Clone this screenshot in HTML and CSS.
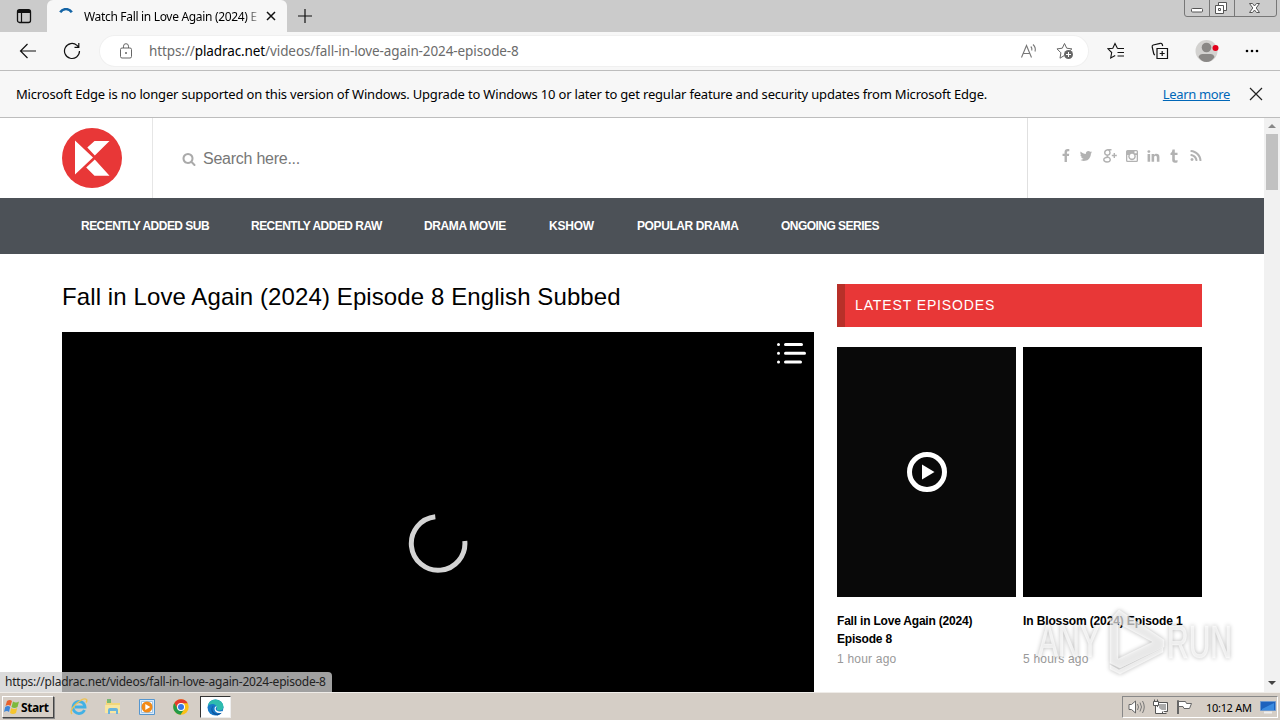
FILE: index.html
```html
<!DOCTYPE html>
<html lang="en">
<head>
<meta charset="utf-8">
<title>Fall in Love Again (2024) Episode 8 English Subbed</title>
<link rel="stylesheet" href="styles.css">
</head>
<body>
<div class="tabstrip">
  <svg class="tab-actions" width="16" height="16" viewBox="0 0 16 16"><rect x="1.500" y="1.700" width="13" height="12.800" rx="2" fill="none" stroke="#111" stroke-width="1.300"/><path d="M2 2h12v3H2z" fill="#111"/><path d="M5.500 5v9" stroke="#111" stroke-width="1.200"/></svg>
  <div class="tab">
    <svg width="16" height="16" viewBox="0 0 16 16"><path d="M2.2 4.200A7 7 0 0 1 13.800 4.200" fill="none" stroke="#1464a5" stroke-width="2.500"/></svg>
    <span class="tab-title">Watch Fall in Love Again (2024) E</span>
    <svg class="tab-close" width="10" height="10" viewBox="0 0 10 10"><path d="M1 1l8 8M9 1l-8 8" stroke="#111" stroke-width="1.500"/></svg>
  </div>
  <svg class="new-tab" width="16" height="16" viewBox="0 0 16 16"><path d="M8 1v14M1 8h14" stroke="#111" stroke-width="1.200"/></svg>
  <svg class="window-controls" width="94" height="18" viewBox="0 0 94 18"><path d="M.5 0v14q0 2.500 2.500 2.500h87q2.500 0 2.500-2.500V0M25.500 0v16M50.500 0v16" fill="none" stroke="#777"/><g fill="#fff" stroke="#555"><rect x="7.500" y="8.500" width="11" height="3.500" rx="1"/><path d="M34.500 2.500h8v8h-8z"/><path d="M31.500 5.500h8v8h-8z"/><path d="M34.500 8.500h2v2h-2z"/><path d="M65.500 3.500h3l2 2.500 2-2.500h3l-3.300 4.500 3.300 4.500h-3l-2-2.500-2 2.500h-3l3.300-4.500z"/></g></svg>
</div>

<div class="toolbar">
  <svg class="back" width="18" height="16" viewBox="0 0 18 16"><path d="M17 8H1.500M8.500 1L1.500 8l7 7" fill="none" stroke="#111" stroke-width="1.200"/></svg>
  <svg class="reload" width="18" height="18" viewBox="0 0 18 18"><path d="M16.500 9A7.500 7.500 0 1 1 14 3.400l1.500 1.500M15.800 1v4.300h-4.300" fill="none" stroke="#111" stroke-width="1.200"/></svg>
  <div class="address">
    <svg class="lock" width="14" height="16" viewBox="0 0 14 16"><rect x="1.500" y="5" width="11" height="10" rx="1.500" fill="none" stroke="#666"/><path d="M4.500 5V3.200a2.500 2.500 0 0 1 5 0V5" fill="none" stroke="#666"/><circle cx="7" cy="10" r="1" fill="#666"/></svg>
    <span class="url">https://<b>pladrac.net</b>/videos/fall-in-love-again-2024-episode-8</span>
    <svg class="read" width="18" height="16" viewBox="0 0 18 16"><path d="M1.500 14.500L6.500 2.500l5 12M3.300 10.500h6.500M10.800 3.500q1.500 1.500 1 4M13 1.500q3.200 3 2 7" fill="none" stroke="#777" stroke-width="1.100"/></svg>
    <svg class="fav" width="18" height="18" viewBox="0 0 18 18"><path d="M6.300 6.200L8.500 1.500l2.200 4.700 5.200.7-2.500 2.300M8 13.700l-4 2.500.9-5.400L1 6.900l5.300-.7" fill="none" stroke="#666"/><circle cx="12.500" cy="12.500" r="4.500" fill="#666"/><path d="M12.500 10v5M10 12.500h5" stroke="#fff"/></svg>
  </div>
  <svg class="favs" width="18" height="18" viewBox="0 0 18 18"><path d="M10.500 6.500L8 1.500 5.800 6.200 1 6.800l3.700 3.700-1 5.500 4.500-2.500M10.500 6.500H17M10.500 10.500H17M10.500 14H17" fill="none" stroke="#111" stroke-width="1.100"/></svg>
  <svg class="collections" width="18" height="18" viewBox="0 0 18 18"><path d="M6 6.500h10.500v10H6zM11.200 9v5M8.700 11.500h5M4 13q-1-.3-1.300-1.500L1.200 5q-.3-1.500 1-2l7-1.700q1.400-.3 2 1l.5 1.700" fill="none" stroke="#111" stroke-width="1.200"/></svg>
  <svg class="profile" width="24" height="24" viewBox="0 0 24 24"><circle cx="11.500" cy="12" r="11" fill="#d3d2d0"/><circle cx="11.500" cy="8.500" r="4.800" fill="#8a8886"/><path d="M3.500 18q1-3 4-3h8q3 0 4 3-3 5-8 5t-8-5z" fill="#8a8886"/><circle cx="20.500" cy="9" r="3" fill="#e3001b"/></svg>
  <svg class="more" width="14" height="4" viewBox="0 0 14 4"><circle cx="2" cy="2" r="1.300"/><circle cx="7" cy="2" r="1.300"/><circle cx="12" cy="2" r="1.300"/></svg>
</div>

<div class="notice">
  <span class="notice-text">Microsoft Edge is no longer supported on this version of Windows. Upgrade to Windows 10 or later to get regular feature and security updates from Microsoft Edge.</span>
  <a class="learn">Learn more</a>
  <svg class="notice-close" width="14" height="14" viewBox="0 0 14 14"><path d="M1 1l12 12M13 1L1 13" stroke="#222" stroke-width="1.200"/></svg>
</div>

<div class="view">
  <div class="page">
    <header class="header">
      <div class="brand"><svg width="60" height="60" viewBox="0 0 60 60"><circle cx="30" cy="30" r="30" fill="#e83737"/><path d="M13 12.500l18 17L13 46.500zM47.500 13h-15L25.300 19.500l7.500 8zM32.800 31.500l14.700 16.200h-15L24.200 39.500z" fill="#fff"/></svg></div>
      <div class="search">
        <svg width="14" height="14" viewBox="0 0 1792 1792"><path fill="#aaa" d="M1216 832q0-185-131.500-316.500t-316.500-131.500-316.500 131.500-131.500 316.500 131.500 316.500 316.500 131.500 316.500-131.500 131.500-316.500zm512 832q0 52-38 90t-90 38q-54 0-90-38l-343-342q-179 124-399 124-143 0-273.500-55.500t-225-150-150-225-55.500-273.500 55.500-273.500 150-225 225-150 273.500-55.500 273.500 55.500 225 150 150 225 55.500 273.500q0 220-124 399l343 343q37 37 37 90z"/></svg>
        <span>Search here...</span>
      </div>
      <div class="social">
        <svg width="8" height="14" viewBox="470 0 900 1792"><path d="M1343 12v264h-157q-86 0-116 36t-30 108v189h293l-39 296h-254v759h-306v-759h-255v-296h255v-218q0-186 104-288.500t277-102.500q147 0 228 12z"/></svg>
        <svg class="s-tw" width="14" height="14" viewBox="0 0 1792 1792"><path d="M1684 408q-67 98-162 167 1 14 1 42 0 130-38 259.500t-115.500 248.500-184.500 210.500-258 146-323 54.500q-271 0-496-145 35 4 78 4 225 0 401-138-105-2-188-64.500t-114-159.500q33 5 61 5 43 0 85-11-112-23-185.500-111.500t-73.500-205.500v-4q68 38 146 41-66-44-105-115t-39-154q0-88 44-163 121 149 294.500 238.500t371.500 99.500q-8-38-8-74 0-134 94.500-228.500t228.500-94.500q140 0 236 102 109-21 205-78-37 115-142 178 93-10 186-50z"/></svg>
        <svg class="s-gp" width="14" height="14" viewBox="0 0 14 14"><path d="M8.500.8H4.800Q1.700 1.300 1.700 3.800 1.800 6 4.500 6.200q2.500-.2 2.500-2.700Q6.800 1.400 5.300 1M4.500 6.200q-.8 1 .3 1.700 2.500 1.200 2.500 2.800-.2 2.300-3.300 2.300Q.8 12.900.8 10.800.9 8.500 4.800 8.300M11.300 4v5M8.800 6.500h5" fill="none" stroke="#b2b2b2" stroke-width="1.400"/></svg>
        <svg class="s-ig" width="12" height="14" viewBox="0 0 12 14"><path fill-rule="evenodd" d="M1.500 1h9Q12 1 12 2.500v9q0 1.500-1.500 1.500h-9Q0 13 0 11.500v-9Q0 1 1.500 1zM1.300 6v5.200q0 .5.5.5h8.400q.5 0 .5-.5V6H9.500a3.800 3.800 0 1 1-7 0zM8.500 2.300v2h2.200v-2zM6 4.800a2.400 2.400 0 1 0 .01 0z"/></svg>
        <svg class="s-in" width="13" height="14" viewBox="80 0 1650 1792"><path d="M477 625v991h-330v-991h330zm21-306q1 73-50.500 122t-135.500 49h-2q-82 0-132-49t-50-122q0-74 51.500-122.500t134.500-48.500 133 48.500 51 122.500zm1166 729v568h-329v-530q0-105-40.500-164.500t-126.500-59.500q-63 0-105.500 34.500t-63.500 85.500q-11 30-11 81v553h-329q2-399 2-647t-1-296l-1-48h329v144h-2q20-32 41-56t56.500-52 87-43.500 114.500-15.500q171 0 275 113.500t104 332.500z"/></svg>
        <svg class="s-tu" width="8" height="14" viewBox="0 0 8 14"><path d="M2.500.5h2.300v3.300h2.700v2.300H4.800v4.200q0 1.200 1.200 1.200.8 0 1.500-.4v2.200q-1 .5-2.500.5-2.800 0-2.800-2.800V6.100H.5V4.200Q2.300 3.300 2.500.5z"/></svg>
        <svg class="s-rs" width="14" height="14" viewBox="0 0 1792 1792"><path d="M576 1344q0 80-56 136t-136 56-136-56-56-136 56-136 136-56 136 56 56 136zm512 123q2 28-17 48-18 21-47 21h-135q-25 0-43-16.500t-20-41.500q-22-229-184.500-391.500t-391.500-184.500q-25-2-41.500-20t-16.500-43v-135q0-29 21-47 17-17 43-17h5q160 13 306 80.500t259 181.500q114 113 181.500 259t80.500 306zm512 2q2 27-18 47-18 20-46 20h-143q-26 0-44.500-17.500t-19.500-42.500q-12-215-101-408.500t-231.500-336-336-231.500-408.500-102q-25-1-42.500-19.500t-17.500-43.500v-143q0-28 20-46 18-18 44-18h3q262 13 501.500 120t425.500 294q187 186 294 425.500t120 501.500z"/></svg>
      </div>
    </header>
    <nav class="nav"><a>RECENTLY ADDED SUB</a><a>RECENTLY ADDED RAW</a><a>DRAMA MOVIE</a><a>KSHOW</a><a>POPULAR DRAMA</a><a>ONGOING SERIES</a></nav>
    <main class="content">
      <section class="watch">
        <h1>Fall in Love Again (2024) Episode 8 English Subbed</h1>
        <div class="player">
          <svg class="playlist" width="30" height="24" viewBox="0 0 30 24"><g fill="none" stroke="#fff" stroke-width="3" stroke-linecap="round"><path d="M9.500 3.500h16M9.500 12.300h19M9.500 21h15M2.500 3.500h.01M2.500 12.300h.01M2.500 21h.01"/></g></svg>
          <svg class="spinner" width="60" height="60" viewBox="0 0 60 60"><path d="M27.300 3.800A26.800 26.800 0 1 0 56.800 28" fill="none" stroke="#d4d4d4" stroke-width="5"/></svg>
        </div>
      </section>
      <aside class="latest">
        <h2>LATEST EPISODES</h2>
        <div class="cards">
          <article>
            <div class="thumb hover"><svg width="40" height="40" viewBox="0 0 40 40"><circle cx="20" cy="20" r="17.500" fill="none" stroke="#fff" stroke-width="5"/><path d="M15 12.500L27.500 20 15 27.500z" fill="#fff"/></svg></div>
            <h3>Fall in Love Again (2024) Episode 8</h3><p>1 hour ago</p>
          </article>
          <article>
            <div class="thumb"></div>
            <h3 class="single">In Blossom (2024) Episode 1</h3><p>5 hours ago</p>
          </article>
        </div>
      </aside>
    </main>
  </div>
  <div class="scrollbar"><i class="arrow-up"></i><i class="thumb-bar"></i><i class="arrow-down"></i></div>
  <div class="status"><span>https://pladrac.net/videos/fall-in-love-again-2024-episode-8</span></div>
  <svg class="watermark" width="220" height="72" viewBox="0 0 220 72">
    <g fill="#fff" fill-opacity=".65" stroke="#fff" stroke-opacity=".4">
      <text x="4" y="50" textLength="62" lengthAdjust="spacingAndGlyphs">ANY</text>
      <text x="133" y="51" textLength="65" lengthAdjust="spacingAndGlyphs">RUN</text>
      <path fill-rule="evenodd" d="M76 13l9-10 45 30v7L86 61l-10-5zM84 16v36l35-17z"/>
      <path d="M76 58l9 5 44-22v4L86 67l-10-5z"/>
    </g>
  </svg>
</div>

<footer class="taskbar">
  <div class="start"><svg width="17" height="16" viewBox="0 0 17 16"><path d="M3 2q3-2 5 0L6.500 7q-2-2-5 0z" fill="#e8622c"/><path d="M9 2.500q3 2 6 0L13.500 8q-3 2-6 0z" fill="#7db93b"/><path d="M1.200 8q3-2 5 0L5 13q-2-2-5 0z" fill="#3e86d8"/><path d="M7.200 9q3 2 6 0L12 14q-3 2-6 0z" fill="#f6c52d"/></svg><span>Start</span></div>
  <svg class="t-ie" width="18" height="18" viewBox="0 0 18 18"><path d="M14.500 12A6 6 0 1 1 15 9H5" fill="none" stroke="#42b1e5" stroke-width="2.800"/><path d="M2 16Q-1 13 6 6q8-7 10.500-4.500.8 1-.5 3" fill="none" stroke="#edc253" stroke-width="1.400"/></svg>
  <svg class="t-ex" width="18" height="18" viewBox="0 0 18 18"><path d="M2 3h5l1 2h8v9H2z" fill="#f3d67a"/><path d="M3 1h4v4H3z" fill="#7bb874"/><path d="M1 7h15v8H1z" fill="#f8e6a0"/><path d="M4 16v-4q0-2 2-2h6q2 0 2 2v4h-2v-3H6v3z" fill="#69b4dc"/></svg>
  <svg class="t-wm" width="18" height="18" viewBox="0 0 18 18"><path d="M1.500 1.500h15v15h-15z" fill="#d9eafa" stroke="#5596cf"/><path d="M3.500 3.500h11v11h-11z" fill="#fff" stroke="#a0c5e5"/><circle cx="9" cy="9" r="5.500" fill="#f28a18"/><path d="M7.300 6l5 3-5 3z" fill="#fff"/></svg>
  <svg class="t-ch" width="16" height="16" viewBox="0 0 16 16"><circle cx="8" cy="8" r="7.700" fill="#fbc116"/><path d="M1.300 4A7.700 7.700 0 0 1 14.700 4.200H8L4.700 10z" fill="#e33b2e"/><path d="M1.300 4A7.700 7.700 0 0 0 7.500 15.700L11.300 10H4.700z" fill="#249a48"/><circle cx="8" cy="8" r="4" fill="#fff"/><circle cx="8" cy="8" r="3" fill="#3778e5"/></svg>
  <div class="running"><svg width="17" height="17" viewBox="0 0 17 17"><circle cx="8.500" cy="8.500" r="8" fill="#1679c9"/><path d="M.8 7Q2 .5 8.500.5q7.500.5 8 7.500-.5 3.500-4.500 3.500-3 0-2-2Q10 6 6.500 5 3 4.500.8 7z" fill="#2ebcae"/><path d="M7 6.500Q4 9 6 12.500q3 4 9 1-1.500 2.200-4.500 2.900Q3.500 15 4.500 9.500 5 7 7 6.500z" fill="#0c529b"/><path d="M10 7.500q-2.500 2.300-.5 4 2.500 1.700 6.500.5l-1 1.800q-4.500 1-6.500-1.300Q6.500 9.500 8.500 7.500z" fill="#fff"/></svg></div>
  <div class="tray">
    <svg class="y-vol" width="17" height="16" viewBox="0 0 17 16"><path d="M1 5.500h2.500L7.500 2v12L3.500 10.500H1z" fill="#fff" stroke="#666"/><path d="M9.500 5q2 3 0 6M12 3.500q3 4.500 0 9M14.500 2q3.500 6 0 12" fill="none" stroke="#777"/></svg>
    <svg class="y-net" width="17" height="16" viewBox="0 0 17 16"><path d="M5.500 3.500h10v9h-10z" fill="#aaa" stroke="#555"/><path d="M6.500 4.500h8v7h-8z" fill="none" stroke="#fff"/><path d="M1.500 2.500h5v4h-5zM2.500.5v2M5.500.5v2M3.500 6.500v8h11M10.500 12.500v2" fill="#fff" stroke="#555"/></svg>
    <svg class="y-flag" width="17" height="16" viewBox="0 0 17 16"><path d="M1.500 15V1.500h1V15M2.500 2.500h7l1 2h5l-2 5H8l-1-2H2.500" fill="#fff" stroke="#666"/></svg>
    <span class="clock">10:12 AM</span>
    <svg class="y-desk" width="16" height="14" viewBox="0 0 16 14"><path d="M.5 1.500h15v9H.5z" fill="#1d62bd" stroke="#6c98ce"/><path d="M2 9l12-6v7H2z" fill="#3a8be0"/><path d="M4 12.500h8" stroke="#eee" stroke-width="2"/></svg>
  </div>
</footer>
</body>
</html>
```

FILE: styles.css
```css
* { box-sizing: border-box; }
body { margin: 0; width: 1280px; height: 720px; overflow: hidden; display: flex; flex-direction: column; background: #fff; font-family: "Noto Sans", "Open Sans", sans-serif; color: #000; }
svg { display: block; flex: none; }
span, a { white-space: nowrap; }
h1, h2, h3, p { margin: 0; }

.tabstrip { height: 32px; flex: none; display: flex; align-items: flex-start; background: #cbcbcb; }
.tab-actions { margin: 8px 0 0 16px; }
.tab { width: 240px; height: 32px; margin-left: 15px; padding: 0 11px; display: flex; align-items: center; background: #f7f7f7; border-radius: 6px 6px 0 0; }
.tab-title { width: 174px; margin-left: 10px; overflow: hidden; font-size: 12px; letter-spacing: -0.32px; background: linear-gradient(90deg, #000 162px, #ccc 174px); background-clip: text; color: transparent; }
.tab-close { margin-left: 8px; }
.new-tab { margin: 8px 0 0 10px; }
.window-controls { margin-left: auto; margin-right: 2px; }

.toolbar { height: 39px; flex: none; display: flex; align-items: center; background: #f7f7f7; border-bottom: 1px solid #bdbdbd; }
.back { margin-left: 19px; }
.reload { margin-left: 26px; }
.address { width: 988px; height: 30px; margin-left: 19px; padding: 0 14px 0 19px; display: flex; align-items: center; background: #fff; border-radius: 15px; box-shadow: 0 0 0 1px #f0f0f0; }
.url { margin-left: 16px; font-size: 13.500px; letter-spacing: -.1px; color: #6b6b6b; }
.url b { font-weight: normal; color: #000; }
.read { margin-left: auto; }
.fav { margin-left: 18px; }
.favs { margin-left: 19px; }
.collections { margin-left: 26px; }
.profile { margin-left: 26px; }
.more { margin-left: 26px; }

.notice { height: 47px; flex: none; display: flex; align-items: center; padding: 0 17px 1px 16px; background: #f7f7f7; border-bottom: 1px solid #bdbdbd; font-size: 13px; }
.notice-text { letter-spacing: -.18px; }
.learn { margin-left: auto; color: #0067b8; text-decoration: underline; letter-spacing: -.35px; }
.notice-close { margin-left: 19px; }

.view { height: 574px; flex: none; display: flex; position: relative; overflow: hidden; font-family: "Liberation Sans", Arial, sans-serif; }
.page { width: 1264px; }
.header { height: 80px; display: flex; }
.brand { width: 153px; padding: 10px 0 0 62px; border-right: 1px solid #e6e6e6; }
.search { width: 875px; padding: 1px 0 0 29px; display: flex; align-items: center; border-right: 1px solid #e0e0e0; font-size: 16px; letter-spacing: -.25px; color: #777; }
.search span { margin-left: 7px; }
.social { flex: 1; display: flex; padding: 31px 0 0 34px; fill: #b2b2b2; }
.s-tw { margin-left: 9px; }
.s-gp { margin-left: 10px; }
.s-ig { margin-left: 9px; }
.s-in { margin-left: 9px; }
.s-tu { margin-left: 10px; }
.s-rs { margin-left: 11px; }
.nav { height: 56px; padding-left: 81px; display: grid; grid-template-columns: 170px 173px 125px 88px 144px auto; align-items: center; background: #4c5157; color: #fff; font-size: 12px; font-weight: bold; letter-spacing: -.53px; }
.nav a:nth-child(3), .nav a:nth-child(5) { letter-spacing: -.4px; }
.nav a:nth-child(4) { letter-spacing: -.2px; }
.content { display: flex; gap: 23px; padding: 30px 62px 0; }
.watch { width: 752px; }
.watch h1 { height: 48px; font-size: 24px; line-height: 26px; letter-spacing: .1px; font-weight: normal; white-space: nowrap; }
.player { height: 420px; position: relative; background: #000; }
.playlist { position: absolute; right: 8px; top: 9px; }
.spinner { position: absolute; left: 346px; top: 181px; }
.latest { width: 365px; }
.latest h2 { height: 43px; padding-left: 10px; border-left: 8px solid #b83029; background: #e83737; color: #fff; font-size: 14px; line-height: 43px; font-weight: normal; letter-spacing: .88px; }
.cards { display: flex; gap: 7px; margin-top: 20px; }
.cards article { width: 179px; }
.thumb { height: 250px; display: flex; align-items: center; justify-content: center; background: #000; }
.hover { background: #090909; }
.cards h3 { width: 150px; margin-top: 15px; font-size: 12px; line-height: 18px; letter-spacing: -.2px; }
.cards .single { width: 179px; height: 36px; white-space: nowrap; letter-spacing: -.12px; }
.cards p { margin-top: 2px; font-size: 12px; line-height: 18px; color: #999; letter-spacing: .2px; }
.scrollbar { width: 16px; display: flex; flex-direction: column; align-items: center; background: #f1f1f1; }
.arrow-up { margin-top: 6px; border: 4px solid transparent; border-top: 0; border-bottom: 4px solid #888; }
.thumb-bar { width: 12px; height: 56px; margin-top: 6px; background: #c1c1c1; }
.arrow-down { margin: auto 0 7px; border: 4px solid transparent; border-bottom: 0; border-top: 4px solid #444; }
.status { position: absolute; left: 0; bottom: 0; width: 332px; height: 20px; padding-left: 5px; border-radius: 0 4px 0 0; background: rgba(208, 208, 208, .77); font: 12px/20px "Noto Sans", sans-serif; letter-spacing: -.22px; color: #222; }
.watermark { position: absolute; left: 1034px; top: 489px; font: 47px "Liberation Sans", sans-serif; filter: drop-shadow(0 0 2px rgba(0, 0, 0, .4)); }

.taskbar { height: 28px; flex: none; display: flex; align-items: center; background: #d5cec6; border-top: 1px solid #efece8; font-size: 12px; }
.start { width: 52px; height: 22px; margin: 1px 0 0 2px; padding-left: 1px; display: flex; align-items: center; border: 1px solid; border-color: #fff #444 #444 #fff; box-shadow: 1px 1px #888; font-weight: bold; font-size: 12px; letter-spacing: -.4px; }
.t-ie { margin-left: 16px; }
.t-ex { margin-left: 16px; }
.t-wm { margin-left: 16px; }
.t-ch { margin-left: 17px; }
.running { width: 31px; height: 22px; margin: 1px 0 0 11px; padding-left: 6px; display: flex; align-items: center; background: #fff; border: 1px solid; border-color: #333 #eee #eee #333; }
.tray { width: 156px; height: 22px; margin: 1px 2px 0 auto; display: flex; align-items: center; border: 1px solid; border-color: #888 #fff #fff #888; }
.y-vol { margin-left: 5px; }
.y-net { margin-left: 7px; }
.y-flag { margin-left: 7px; }
.clock { width: 46px; margin-left: 13px; font-size: 11px; letter-spacing: -.3px; }
.y-desk { margin-left: 8px; }
```
